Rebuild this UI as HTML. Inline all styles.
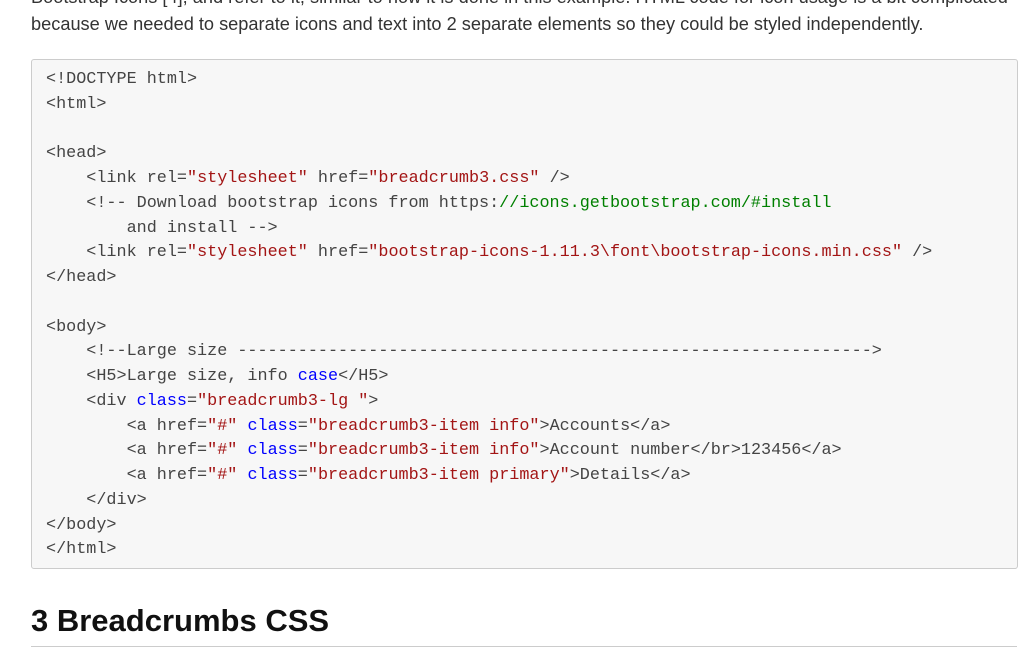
<!DOCTYPE html>
<html><head><style>
html,body{margin:0;padding:0;background:#fff;width:1034px;height:662px;overflow:hidden}
body{font-family:"Liberation Sans",Arial,sans-serif;color:#333;position:relative}
.p{position:absolute;left:31px;font-size:18.2px;white-space:nowrap;line-height:20px}
pre{position:absolute;left:31px;top:59px;width:987px;height:510px;margin:0;box-sizing:border-box;background:#f7f7f7;border:1px solid #ccc;border-radius:3px;padding:8px 14px;font-family:"Liberation Mono","Courier New",monospace;font-size:16.8px;line-height:24.75px;color:#444}
.s{color:#a31515}.b{color:#0000ff}.g{color:#008000}
h2{position:absolute;left:31px;top:601px;margin:0;font-size:31px;font-weight:bold;color:#111;line-height:40px}
.hr{position:absolute;left:31px;top:646px;width:986px;height:1px;background:#ccc}
</style></head><body>
<div class="p" style="top:-13px">Bootstrap Icons [4], and refer to it, similar to how it is done in this example. HTML code for icon usage is a bit complicated</div>
<div class="p" style="top:14px">because we needed to separate icons and text into 2 separate elements so they could be styled independently.</div>
<pre>&lt;!DOCTYPE html&gt;
&lt;html&gt;

&lt;head&gt;
    &lt;link rel=<span class="s">"stylesheet"</span> href=<span class="s">"breadcrumb3.css"</span> /&gt;
    &lt;!-- Download bootstrap icons from https:<span class="g">//icons.getbootstrap.com/#install</span>
        and install --&gt;
    &lt;link rel=<span class="s">"stylesheet"</span> href=<span class="s">"bootstrap-icons-1.11.3\font\bootstrap-icons.min.css"</span> /&gt;
&lt;/head&gt;

&lt;body&gt;
    &lt;!--Large size ---------------------------------------------------------------&gt;
    &lt;H5&gt;Large size, info <span class="b">case</span>&lt;/H5&gt;
    &lt;div <span class="b">class</span>=<span class="s">"breadcrumb3-lg "</span>&gt;
        &lt;a href=<span class="s">"#"</span> <span class="b">class</span>=<span class="s">"breadcrumb3-item info"</span>&gt;Accounts&lt;/a&gt;
        &lt;a href=<span class="s">"#"</span> <span class="b">class</span>=<span class="s">"breadcrumb3-item info"</span>&gt;Account number&lt;/br&gt;123456&lt;/a&gt;
        &lt;a href=<span class="s">"#"</span> <span class="b">class</span>=<span class="s">"breadcrumb3-item primary"</span>&gt;Details&lt;/a&gt;
    &lt;/div&gt;
&lt;/body&gt;
&lt;/html&gt;</pre>
<h2>3 Breadcrumbs CSS</h2>
<div class="hr"></div>
</body></html>
